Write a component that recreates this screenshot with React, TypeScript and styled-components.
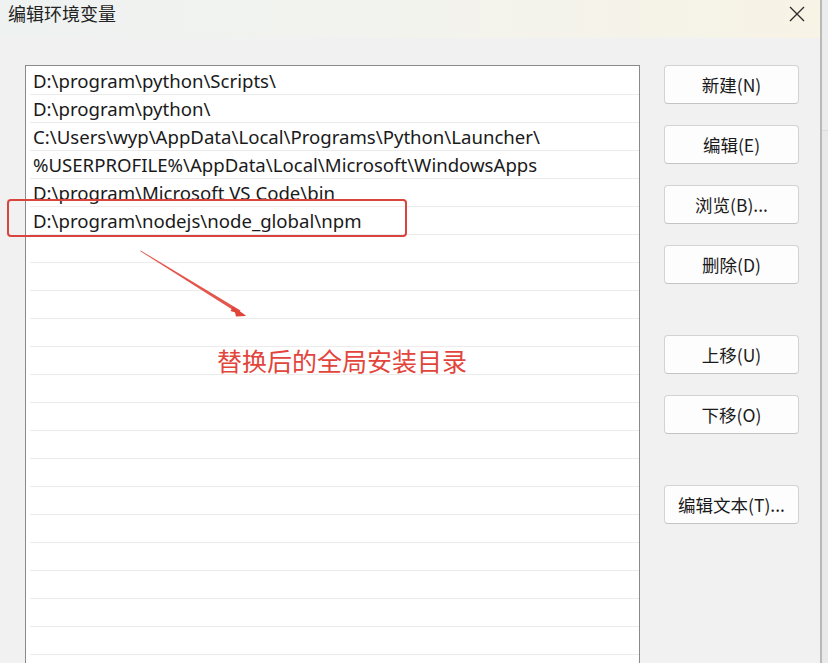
import React from "react";
import styled, { createGlobalStyle } from "styled-components";

const Global = createGlobalStyle`
  html, body { margin: 0; padding: 0; background: #f0f0f0; }
  body { width: 828px; height: 663px; overflow: hidden; }
`;

const FONT = `"Noto Sans", "Noto Sans CJK SC", sans-serif`;

const Screen = styled.div`
  width: 828px;
  height: 663px;
  display: flex;
  overflow: hidden;
  font-family: ${FONT};
  color: #1b1b1b;
`;

const Dialog = styled.div`
  position: relative;
  width: 820px;
  height: 663px;
  background: #f1f1f2;
  display: flex;
  flex-direction: column;
`;

const Edge = styled.div`
  width: 6px;
  height: 663px;
  border-left: 2px solid #b9b9b9;
  background: linear-gradient(#ececec 0 130px, #dcdcdc 130px 131px, #e9e9e9 131px);
`;

const TitleBar = styled.div`
  height: 38px;
  flex: none;
  display: flex;
  align-items: flex-start;
  justify-content: space-between;
  padding: 2px 14px 0 8px;
  background: linear-gradient(90deg, #eef2f1 0%, #f3f3ee 50%, #f7f3e5 100%);
  box-sizing: border-box;
`;

const Title = styled.div`
  font-family: "Noto Sans CJK SC", sans-serif;
  font-size: 18px;
  line-height: 22px;
  color: #222;
`;

const Close = styled.div`
  width: 18px;
  height: 18px;
  margin-top: 3px;
  display: flex;
`;

const Body = styled.div`
  flex: 1;
  display: flex;
  padding: 27px 0 0 25px;
  min-height: 0;
`;

const List = styled.div`
  width: 615px;
  flex: none;
  background: #fff;
  border: 1px solid #8a8a8a;
  border-bottom: none;
  box-sizing: border-box;
  padding: 1px 0 0 4px;
  display: flex;
  flex-direction: column;
  overflow: hidden;
`;

const Row = styled.div`
  height: 28px;
  flex: none;
  box-sizing: border-box;
  border-bottom: 1px solid #ececec;
  padding-left: 3px;
  font-size: 18.6px;
  line-height: 27px;
  white-space: nowrap;
  color: #1a1a1a;
`;

const Buttons = styled.div`
  margin-left: 24px;
  width: 135px;
  display: flex;
  flex-direction: column;
`;

const Btn = styled.div<{ $gap?: number }>`
  height: 39px;
  margin-top: ${(p) => p.$gap ?? 0}px;
  box-sizing: border-box;
  background: #fdfdfd;
  border: 1px solid #d3d3d3;
  border-bottom-color: #c4c4c4;
  border-radius: 4px;
  display: flex;
  align-items: center;
  justify-content: center;
  font-family: "Noto Sans CJK SC", sans-serif;
  font-size: 17.5px;
  color: #1a1a1a;
`;

const Highlight = styled.div`
  position: absolute;
  left: 7px;
  top: 199px;
  width: 400px;
  height: 38px;
  box-sizing: border-box;
  border: 2px solid #d9443d;
  border-radius: 4px;
`;

const ArrowSvg = styled.svg`
  position: absolute;
  left: 130px;
  top: 240px;
`;

const Note = styled.div`
  position: absolute;
  left: 217px;
  top: 343px;
  font-family: "Noto Sans CJK SC", sans-serif;
  font-size: 25px;
  line-height: 34px;
  color: #e2453b;
  white-space: nowrap;
`;

const paths = [
  "D:\\program\\python\\Scripts\\",
  "D:\\program\\python\\",
  "C:\\Users\\wyp\\AppData\\Local\\Programs\\Python\\Launcher\\",
  "%USERPROFILE%\\AppData\\Local\\Microsoft\\WindowsApps",
  "D:\\program\\Microsoft VS Code\\bin",
  "D:\\program\\nodejs\\node_global\\npm",
];

const buttons: { label: string; gap: number }[] = [
  { label: "新建(N)", gap: 0 },
  { label: "编辑(E)", gap: 21 },
  { label: "浏览(B)...", gap: 21 },
  { label: "删除(D)", gap: 21 },
  { label: "上移(U)", gap: 51 },
  { label: "下移(O)", gap: 21 },
  { label: "编辑文本(T)...", gap: 51 },
];

export default function App() {
  const rows = [...paths, ...Array(16).fill("")];
  return (
    <>
      <Global />
      <Screen>
        <Dialog>
          <TitleBar>
            <Title>编辑环境变量</Title>
            <Close>
              <svg width="18" height="18" viewBox="0 0 18 18">
                <path d="M2 2 L16 16 M16 2 L2 16" stroke="#2a2a2a" strokeWidth="1.3" fill="none" />
              </svg>
            </Close>
          </TitleBar>
          <Body>
            <List>
              {rows.map((t, i) => (
                <Row key={i}>{t}</Row>
              ))}
            </List>
            <Buttons>
              {buttons.map((b) => (
                <Btn key={b.label} $gap={b.gap}>
                  {b.label}
                </Btn>
              ))}
            </Buttons>
          </Body>
          <Highlight />
          <ArrowSvg width="130" height="90" viewBox="0 0 130 90">
            <polygon points="10,11 10.6,10.4 110.5,70.5 108.5,73.5" fill="#e0443a" opacity="0.9" />
            <polygon points="104,68 116,76 106,76.5 " fill="#e0443a" />
            <polygon points="103,66.5 116.5,76 100.5,71" fill="#e0443a" />
          </ArrowSvg>
          <Note>替换后的全局安装目录</Note>
        </Dialog>
        <Edge />
      </Screen>
    </>
  );
}
